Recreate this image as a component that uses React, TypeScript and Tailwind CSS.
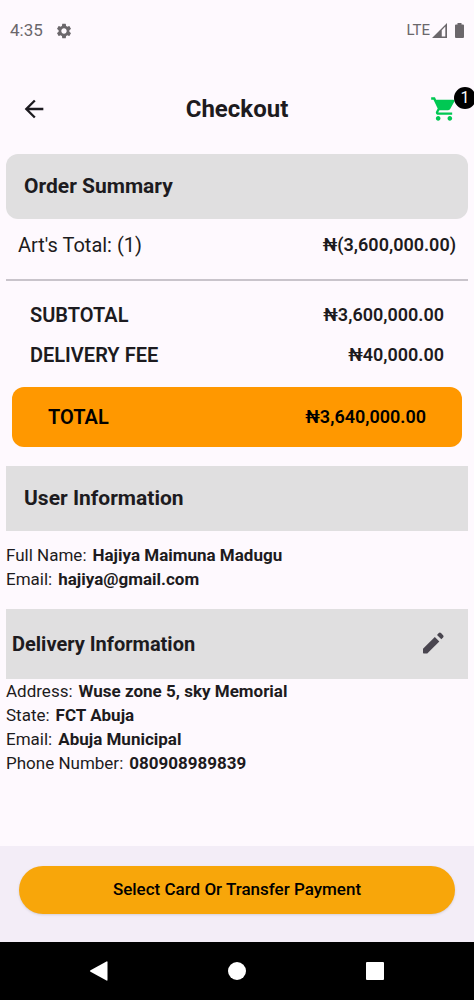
import type { ReactNode } from 'react'
import { MdArrowBack, MdSettings, MdShoppingCart } from 'react-icons/md'

const deliveryInfo = [
  { label: 'Address', value: 'Wuse zone 5, sky Memorial' },
  { label: 'State', value: 'FCT Abuja' },
  { label: 'Email', value: 'Abuja Municipal' },
  { label: 'Phone Number', value: '080908989839' },
]

const userInfo = [
  { label: 'Full Name', value: 'Hajiya Maimuna Madugu' },
  { label: 'Email', value: 'hajiya@gmail.com' },
]

function StatusBar() {
  return (
    <div className="flex h-15 items-center justify-between pl-2.5 pr-2.5 pt-px text-[#6b676b]">
      <div className="flex items-center gap-3">
        <span className="text-[17px]">4:35</span>
        <MdSettings size={18} />
      </div>
      <div className="flex items-center">
        <span className="text-[15px]">LTE</span>
        <svg width="15" height="15" viewBox="0 0 16 16" className="ml-0.5">
          <path d="M0 16 L16 0 V16 Z M10.4 7.6 V14.4 H14.2 V3.8 Z" fill="currentColor" fillRule="evenodd" />
        </svg>
        <svg width="9" height="15" viewBox="0 0 9 15" className="ml-2">
          <path d="M2.5 0 H6.5 V1.5 H8 Q9 1.5 9 2.5 V14 Q9 15 8 15 H1 Q0 15 0 14 V2.5 Q0 1.5 1 1.5 H2.5 Z" fill="currentColor" />
        </svg>
      </div>
    </div>
  )
}

function Header() {
  return (
    <header className="grid h-[94px] grid-cols-[1fr_auto_1fr] items-center pt-1">
      <button type="button" aria-label="Back" className="ml-5 w-7 text-[#1d1b20]">
        <MdArrowBack size={28} />
      </button>
      <h1 className="text-2xl font-bold">Checkout</h1>
      <button type="button" aria-label="Cart" className="relative w-11 justify-self-end text-[#00c853]">
        <MdShoppingCart size={28} />
        <span className="absolute -right-0.5 -top-2 flex size-[22px] items-center justify-center rounded-full bg-black text-base text-white">
          1
        </span>
      </button>
    </header>
  )
}

function AmountRow({ label, amount }: { label: string; amount: string }) {
  return (
    <div className="flex h-10 items-center justify-between">
      <dt className="text-xl font-semibold">{label}</dt>
      <dd className="text-lg font-semibold">{amount}</dd>
    </div>
  )
}

function Details({ items }: { items: { label: string; value: string }[] }) {
  return (
    <dl className="text-[17px] leading-6">
      {items.map((item) => (
        <div key={item.label} className="flex gap-1.5">
          <dt>{item.label}:</dt>
          <dd className="font-bold">{item.value}</dd>
        </div>
      ))}
    </dl>
  )
}

function PencilIcon() {
  return (
    <svg width="28" height="28" viewBox="0 0 28 28" fill="currentColor">
      <path d="M3 18.7 L14.8 6.9 L19.3 11.4 L7.5 23.2 Q7.2 23.5 6.8 23.5 H3.7 Q3 23.5 3 22.8 Z" />
      <path d="M17 4.9 L18.8 3.1 Q19.9 2 21 3.1 L23.1 5.2 Q24.2 6.3 23.1 7.4 L21.3 9.2 Z" />
    </svg>
  )
}

function NavButton({ label, children }: { label: string; children: ReactNode }) {
  return (
    <button type="button" aria-label={label} className="flex size-10 items-center justify-center">
      <svg width="20" height="20" viewBox="0 0 20 20" fill="white">
        {children}
      </svg>
    </button>
  )
}

export default function App() {
  return (
    <div className="flex min-h-screen flex-col overflow-hidden bg-[#fef9fe] font-[Roboto,sans-serif] text-[#1d1b20]">
      <StatusBar />
      <Header />

      <main className="flex-1 px-1.5">
        {/* Order summary */}
        <h2 className="flex h-[65px] items-center rounded-xl bg-[#e0dfe0] px-4.5 text-[21px] font-bold">
          Order Summary
        </h2>
        <div className="flex h-15 items-center justify-between px-3 pb-2">
          <span className="text-xl">Art's Total: (1)</span>
          <span className="text-lg font-semibold">₦(3,600,000.00)</span>
        </div>
        <hr className="border-t-2 border-[#c9c4cb]" />
        <dl className="px-6 pb-3 pt-3.5">
          <AmountRow label="SUBTOTAL" amount="₦3,600,000.00" />
          <AmountRow label="DELIVERY FEE" amount="₦40,000.00" />
        </dl>
        <dl className="mx-1.5 rounded-xl bg-[#ff9800] px-9 py-2.5 text-black">
          <AmountRow label="TOTAL" amount="₦3,640,000.00" />
        </dl>

        {/* User */}
        <h2 className="mb-3 mt-[19px] flex h-[65px] items-center bg-[#e0dfe0] px-4.5 text-[21px] font-bold">
          User Information
        </h2>
        <Details items={userInfo} />

        {/* Delivery */}
        <div className="mt-4.5 flex h-[70px] items-center justify-between bg-[#e0dfe0] pl-1.5 pr-5">
          <h2 className="text-xl font-bold">Delivery Information</h2>
          <button type="button" aria-label="Edit delivery information" className="text-[#49454f]">
            <PencilIcon />
          </button>
        </div>
        <Details items={deliveryInfo} />
      </main>

      <div className="bg-[#f3edf7] px-[19px] pb-7 pt-5">
        <button
          type="button"
          className="h-12 w-full rounded-full bg-[#f8a60a] text-[17px] font-medium text-black shadow-sm"
        >
          Select Card Or Transfer Payment
        </button>
      </div>

      <nav className="flex h-[58px] items-center justify-around bg-black px-[30px]">
        <NavButton label="Back">
          <path d="M1.5 9.2 L17.5 0.5 Q18.5 0 18.5 1.2 V18.8 Q18.5 20 17.5 19.5 L1.5 10.8 Q0.3 10 1.5 9.2 Z" />
        </NavButton>
        <NavButton label="Home">
          <circle cx="10" cy="10" r="9" />
        </NavButton>
        <NavButton label="Recent apps">
          <rect x="1" y="1" width="18" height="18" rx="1" />
        </NavButton>
      </nav>
    </div>
  )
}
